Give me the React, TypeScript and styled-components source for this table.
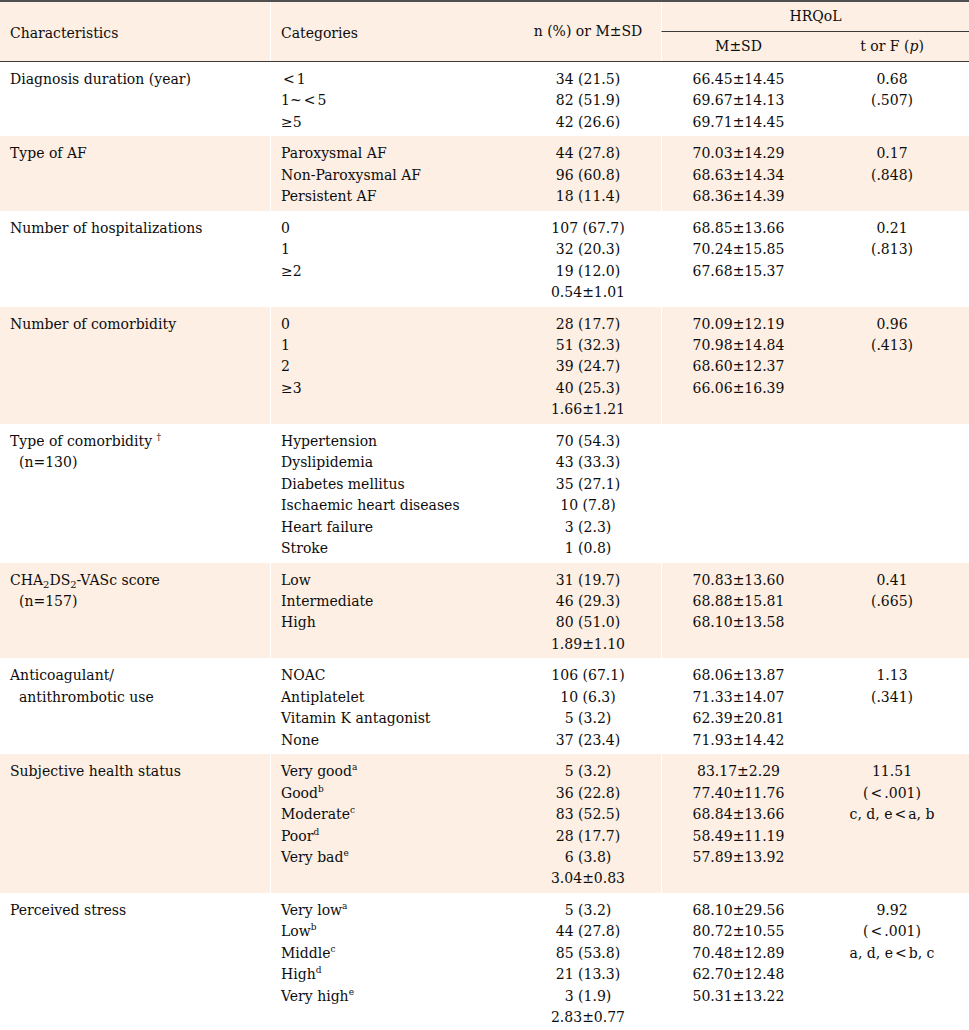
import React from "react";
import styled, { createGlobalStyle } from "styled-components";

const GlobalStyle = createGlobalStyle`
  html, body { margin: 0; padding: 0; background: #ffffff; }
  body {
    font-family: "DejaVu Serif", "Liberation Serif", "Noto Sans CJK KR", serif;
    color: #0d0d0d;
  }
`;

const PEACH = "#fdefe4";
const COLS = "270px 245px 146px 154px 154px";

const Table = styled.div`
  width: 969px;
  border-top: 2px solid #505050;
  border-bottom: 2px solid #505050;
  font-size: 14px;
  line-height: 21.45px;
`;

const Head = styled.div`
  display: grid;
  grid-template-columns: ${COLS};
  grid-template-rows: 30px 29px;
  background: ${PEACH};
  border-bottom: 1px solid #3a3a3a;
`;

const HeadCell = styled.div<{ $col: string; $row: string; $align?: string; $sep?: boolean; $rule?: boolean; $drop?: number }>`
  grid-column: ${(p) => p.$col};
  grid-row: ${(p) => p.$row};
  display: flex;
  align-items: center;
  justify-content: ${(p) => p.$align || "flex-start"};
  padding: ${(p) => p.$drop || 0}px 10px 0;
  border-left: ${(p) => (p.$sep ? "1px solid #ffffff" : "none")};
  border-bottom: ${(p) => (p.$rule ? "1px solid #3a3a3a" : "none")};
`;

const Group = styled.div<{ $shade: boolean }>`
  display: grid;
  grid-template-columns: ${COLS};
  background: ${(p) => (p.$shade ? PEACH : "#ffffff")};
`;

const Cell = styled.div<{ $align?: "left" | "center"; $sep?: boolean }>`
  padding: 7px 10px 3px;
  text-align: ${(p) => p.$align || "left"};
  border-left: ${(p) => (p.$sep ? "1px solid #ffffff" : "none")};
  white-space: nowrap;
`;

const Line = styled.div<{ $indent?: boolean }>`
  padding-left: ${(p) => (p.$indent ? "9px" : "0")};
`;

const Sup = styled.sup`
  font-size: 9px;
  line-height: 0;
  vertical-align: 6px;
`;

const Sub = styled.sub`
  font-size: 10px;
  line-height: 0;
  vertical-align: -3px;
`;

const Ital = styled.i`
  font-style: italic;
`;

const Lt = styled.span`
  display: inline-block;
  margin: 0 2px;
`;

type Node = React.ReactNode;
interface GroupData {
  ch: Node[];
  cats: Node[];
  n: Node[];
  m: Node[];
  t: Node[];
  shade: boolean;
}

const groups: GroupData[] = [
  {
    ch: ["Diagnosis duration (year)"],
    cats: [<><Lt>&lt;</Lt>1</>, <>1~<Lt>&lt;</Lt>5</>, "≥5"],
    n: ["34 (21.5)", "82 (51.9)", "42 (26.6)"],
    m: ["66.45±14.45", "69.67±14.13", "69.71±14.45"],
    t: ["0.68", "(.507)"],
    shade: false,
  },
  {
    ch: ["Type of AF"],
    cats: ["Paroxysmal AF", "Non-Paroxysmal AF", "Persistent AF"],
    n: ["44 (27.8)", "96 (60.8)", "18 (11.4)"],
    m: ["70.03±14.29", "68.63±14.34", "68.36±14.39"],
    t: ["0.17", "(.848)"],
    shade: true,
  },
  {
    ch: ["Number of hospitalizations"],
    cats: ["0", "1", "≥2"],
    n: ["107 (67.7)", "32 (20.3)", "19 (12.0)", "0.54±1.01"],
    m: ["68.85±13.66", "70.24±15.85", "67.68±15.37"],
    t: ["0.21", "(.813)"],
    shade: false,
  },
  {
    ch: ["Number of comorbidity"],
    cats: ["0", "1", "2", "≥3"],
    n: ["28 (17.7)", "51 (32.3)", "39 (24.7)", "40 (25.3)", "1.66±1.21"],
    m: ["70.09±12.19", "70.98±14.84", "68.60±12.37", "66.06±16.39"],
    t: ["0.96", "(.413)"],
    shade: true,
  },
  {
    ch: [
      <>
        Type of comorbidity <Sup>†</Sup>
      </>,
      "(n=130)",
    ],
    cats: ["Hypertension", "Dyslipidemia", "Diabetes mellitus", "Ischaemic heart diseases", "Heart failure", "Stroke"],
    n: ["70 (54.3)", "43 (33.3)", "35 (27.1)", "10 (7.8)", "3 (2.3)", "1 (0.8)"],
    m: [],
    t: [],
    shade: false,
  },
  {
    ch: [
      <>
        CHA<Sub>2</Sub>DS<Sub>2</Sub>-VASc score
      </>,
      "(n=157)",
    ],
    cats: ["Low", "Intermediate", "High"],
    n: ["31 (19.7)", "46 (29.3)", "80 (51.0)", "1.89±1.10"],
    m: ["70.83±13.60", "68.88±15.81", "68.10±13.58"],
    t: ["0.41", "(.665)"],
    shade: true,
  },
  {
    ch: ["Anticoagulant/", "antithrombotic use"],
    cats: ["NOAC", "Antiplatelet", "Vitamin K antagonist", "None"],
    n: ["106 (67.1)", "10 (6.3)", "5 (3.2)", "37 (23.4)"],
    m: ["68.06±13.87", "71.33±14.07", "62.39±20.81", "71.93±14.42"],
    t: ["1.13", "(.341)"],
    shade: false,
  },
  {
    ch: ["Subjective health status"],
    cats: [
      <>Very good<Sup>a</Sup></>,
      <>Good<Sup>b</Sup></>,
      <>Moderate<Sup>c</Sup></>,
      <>Poor<Sup>d</Sup></>,
      <>Very bad<Sup>e</Sup></>,
    ],
    n: ["5 (3.2)", "36 (22.8)", "83 (52.5)", "28 (17.7)", "6 (3.8)", "3.04±0.83"],
    m: ["83.17±2.29", "77.40±11.76", "68.84±13.66", "58.49±11.19", "57.89±13.92"],
    t: ["11.51", <>(<Lt>&lt;</Lt>.001)</>, <>c, d, e<Lt>&lt;</Lt>a, b</>],
    shade: true,
  },
  {
    ch: ["Perceived stress"],
    cats: [
      <>Very low<Sup>a</Sup></>,
      <>Low<Sup>b</Sup></>,
      <>Middle<Sup>c</Sup></>,
      <>High<Sup>d</Sup></>,
      <>Very high<Sup>e</Sup></>,
    ],
    n: ["5 (3.2)", "44 (27.8)", "85 (53.8)", "21 (13.3)", "3 (1.9)", "2.83±0.77"],
    m: ["68.10±29.56", "80.72±10.55", "70.48±12.89", "62.70±12.48", "50.31±13.22"],
    t: ["9.92", <>(<Lt>&lt;</Lt>.001)</>, <>a, d, e<Lt>&lt;</Lt>b, c</>],
    shade: false,
  },
];

const Lines: React.FC<{ items: Node[]; indentRest?: boolean }> = ({ items, indentRest }) => (
  <>
    {items.map((it, i) => (
      <Line key={i} $indent={indentRest && i > 0}>
        {it}
      </Line>
    ))}
  </>
);

export default function App() {
  return (
    <>
      <GlobalStyle />
      <Table>
        <Head>
          <HeadCell $col="1" $row="1 / 3" $drop={4}>Characteristics</HeadCell>
          <HeadCell $col="2" $row="1 / 3" $sep $drop={4}>Categories</HeadCell>
          <HeadCell $col="3" $row="1 / 3" $align="center">n (%) or M±SD</HeadCell>
          <HeadCell $col="4 / 6" $row="1" $align="center" $sep $rule>HRQoL</HeadCell>
          <HeadCell $col="4" $row="2" $align="center" $sep>M±SD</HeadCell>
          <HeadCell $col="5" $row="2" $align="center">
            t or F (<Ital>p</Ital>)
          </HeadCell>
        </Head>
        {groups.map((g, i) => (
          <Group key={i} $shade={g.shade}>
            <Cell>
              <Lines items={g.ch} indentRest />
            </Cell>
            <Cell $sep>
              <Lines items={g.cats} />
            </Cell>
            <Cell $align="center">
              <Lines items={g.n} />
            </Cell>
            <Cell $align="center" $sep>
              <Lines items={g.m} />
            </Cell>
            <Cell $align="center">
              <Lines items={g.t} />
            </Cell>
          </Group>
        ))}
      </Table>
    </>
  );
}
